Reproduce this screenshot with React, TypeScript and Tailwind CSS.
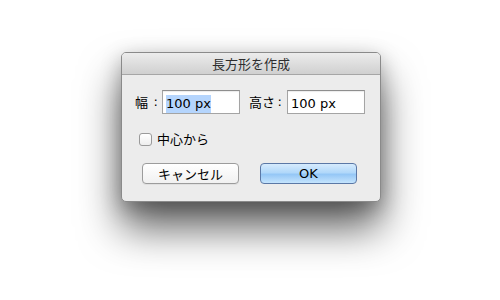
import React from 'react';

const ui = { fontFamily: '"DejaVu Sans", "Noto Sans CJK JP", sans-serif' };
const jp = { fontFamily: '"Noto Sans CJK JP", "DejaVu Sans", sans-serif' };

const Field: React.FC<{ value: string; selected?: boolean }> = ({ value, selected }) => (
  <div className="w-[78px] h-[24px] bg-white border border-[#a4a4a4] border-t-[#8e8e8e] pl-[3px] pt-[2px] shadow-[inset_0_1px_1px_rgba(0,0,0,0.08)]">
    <span
      className={`inline-block h-[18px] leading-[18px] text-[13px] text-black ${selected ? 'bg-[#b5d5fd]' : ''}`}
      style={ui}
    >
      {value}
    </span>
  </div>
);

const App: React.FC = () => {
  return (
    <div className="w-[500px] h-[300px] bg-white pt-[52px] pl-[121px] overflow-hidden">
      <div className="w-[260px] h-[150px] rounded-[5px] border border-[#8a8a8a] bg-[#ececec] shadow-[0_26px_42px_rgba(0,0,0,0.62),0_6px_20px_rgba(0,0,0,0.25)] overflow-hidden flex flex-col">
        <div
          className="h-[22px] shrink-0 bg-gradient-to-b from-[#ececec] to-[#d0d0d0] border-b border-[#a6a6a6] flex items-center justify-center text-[13px] text-[#2e2e2e]"
          style={jp}
        >
          長方形を作成
        </div>

        <div className="flex flex-col pl-[13px] pt-[15px] text-[13px] text-black" style={jp}>
          <div className="flex items-center">
            <div className="w-[27px] flex justify-between pr-[4px]">
              <span>幅</span>
              <span style={ui}>:</span>
            </div>
            <Field value="100 px" selected />
            <div className="w-[38px] ml-[9px] flex justify-between pr-[5px]">
              <span>高さ</span>
              <span style={ui}>:</span>
            </div>
            <Field value="100 px" />
          </div>

          <div className="flex items-center mt-[18px] ml-[4px]">
            <div className="w-[13px] h-[13px] rounded-[3px] border border-[#9a9a9a] bg-gradient-to-b from-white to-[#eeeeee]" />
            <span className="ml-[5px] leading-[14px]">中心から</span>
          </div>

          <div className="flex mt-[17px] ml-[7px] gap-[21px]">
            <div className="w-[97px] h-[21px] rounded-[4px] border border-[#9c9c9c] bg-gradient-to-b from-white to-[#f1f1f1] flex items-center justify-center text-[13px] text-black shadow-[0_1px_0_rgba(0,0,0,0.05)]">
              キャンセル
            </div>
            <div
              className="w-[97px] h-[21px] rounded-[4px] border border-[#5b78a6] bg-[linear-gradient(to_bottom,#d6ebfd_0%,#b1d8fa_45%,#95c7f6_55%,#c4e4fd_100%)] flex items-center justify-center text-[13px] text-black"
              style={ui}
            >
              OK
            </div>
          </div>
        </div>
      </div>
    </div>
  );
};

export default App;
